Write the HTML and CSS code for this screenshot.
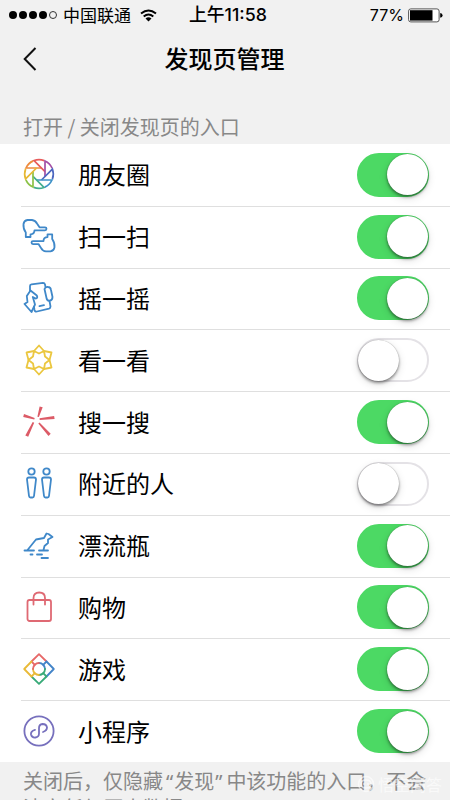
FILE: index.html
```html
<!DOCTYPE html>
<html lang="zh-CN">
<head>
<meta charset="utf-8">
<title>发现页管理</title>
<link rel="stylesheet" href="styles.css">
</head>
<body>
<div class="status">
  <div class="carrier"><span class="signal"><i></i><i></i><i></i><i></i><i class="empty"></i></span><span class="name">中国联通</span>
    <svg class="wifi" width="17" height="13" viewBox="0 0 17 13" fill="none" stroke="#000" stroke-width="2"><path d="M1 4.600Q8.500-1.700 16 4.600M3.700 7.600Q8.500 3.300 13.300 7.600"/><path d="M5.500 9.500Q8.500 7 11.500 9.500L8.500 12.500Z" fill="#000" stroke="none"/></svg>
  </div>
  <div class="time">上午11:58</div>
  <div class="power"><span>77%</span>
    <svg width="35" height="15" viewBox="0 0 35 15"><rect x=".6" y=".9" width="30.500" height="13" rx="2.200" fill="#fff" stroke="#555"/><path d="M2 2.200h22.500v10.400H2z"/><path d="M32.200 5q2.400.5 2.400 2.400t-2.400 2.400z"/></svg>
  </div>
</div>
<header class="nav">
  <svg class="back" width="14" height="24" viewBox="0 0 14 24" fill="none" stroke="#111" stroke-width="2"><path d="M12.500 1L1.700 12L12.500 23"/></svg>
  <h1>发现页管理</h1>
</header>
<p class="caption">打开 / 关闭发现页的入口</p>
<main class="list">
  <div class="row"><svg class="icon" viewBox="0 0 32 32"><defs><path id="blade" d="M18.500 10H3A14.300 14.300 0 0 1 10.200 2.900"/></defs><g fill="none" stroke-width="1.700"><use href="#blade" stroke="#ee8b3d"/><use href="#blade" stroke="#e75b5b" transform="rotate(45 16 16)"/><use href="#blade" stroke="#a34fa5" transform="rotate(90 16 16)"/><use href="#blade" stroke="#4d68c0" transform="rotate(135 16 16)"/><use href="#blade" stroke="#3e91c7" transform="rotate(180 16 16)"/><use href="#blade" stroke="#42ad8f" transform="rotate(225 16 16)"/><use href="#blade" stroke="#8bc247" transform="rotate(270 16 16)"/><use href="#blade" stroke="#e6b834" transform="rotate(315 16 16)"/></g></svg><span class="label">朋友圈</span><span class="switch on"></span></div>
  <div class="row"><svg class="icon" viewBox="0 0 32 32"><defs><path id="hand" d="M2.800 17V12.500Q0 8.500.5 4Q1 .5 4.500 0H9Q12.500.3 14 3.500L16.500 7.300H22Q23.500 7.300 23.500 8.800T22 10.300H11.500Q11.500 14.300 7.500 14.300V17Z"/></defs><g class="line blue"><use href="#hand"/><use href="#hand" transform="rotate(180 16 15.700)"/></g></svg><span class="label">扫一扫</span><span class="switch on"></span></div>
  <div class="row"><svg class="icon" viewBox="0 0 32 32"><g class="line blue"><path d="M7 8.500V4Q7 2.500 8.500 2.300L20 .8Q21.600.8 22 2.500L22.500 5M26.500 19L27.500 24.500Q27.500 26.200 26 26.600L14 29.500Q12 30 11.500 28L11 25"/><path d="M21.500 7Q22.500 4.500 25 5Q27.500 5 28 8L29.500 15Q29.500 18.500 26.500 18.700Q24 19 23.500 16Z"/><path d="M7.500 8.500L13.800 13.500Q15.200 16.500 12.500 16.500L9.800 15L12 22.500L8.500 30L1.500 22L4.500 20L3.800 14Z"/><path d="M16.500 24.200L21 23.200"/></g></svg><span class="label">摇一摇</span><span class="switch on"></span></div>
  <div class="row"><svg class="icon" viewBox="0 0 32 32"><g class="line yellow"><path d="M16 1.500L21 7L28.500 8.500L26.500 16L28.500 23.500L21 25L16 30.500L11 25L3.500 23.500L5.500 16L3.500 8.500L11 7Z"/><path d="M11 7L16 9.500L21 7L22 12.500L26.500 16L22 19.500L21 25L16 22.500L11 25L10 19.500L5.500 16L10 12.500Z"/></g></svg><span class="label">看一看</span><span class="switch"></span></div>
  <div class="row"><svg class="icon" viewBox="0 0 32 32"><g fill="#dc5b67"><path d="M16.600.4l3.100.8-3.800 9.900-1.500-.4zM.2 10.900l.8-3 10.700 4.200-.4 1.500zM16.500 12.300l14.600-2.400.5 3-14.900 1.100zM9.700 16l1.500.8-6 14-2.900-1.400zM15.300 17.600l1.200-1 11.200 11.100-2.200 2.300z"/></g></svg><span class="label">搜一搜</span><span class="switch on"></span></div>
  <div class="row"><svg class="icon" viewBox="0 0 32 32"><g class="line blue"><circle cx="8.500" cy="4.500" r="3.200"/><circle cx="23.500" cy="4.500" r="3.200"/><path d="M6 10.500H11Q13 10.500 13 12.500L11 29Q10.800 30.500 9.500 30.500H7.500Q6.200 30.500 6 29L4 12.500Q4 10.500 6 10.500ZM21 10.500H26Q28 10.500 28 12.500L26 29Q25.800 30.500 24.500 30.500H22.500Q21.200 30.500 21 29L19 12.500Q19 10.500 21 10.500Z"/></g></svg><span class="label">附近的人</span><span class="switch"></span></div>
  <div class="row"><svg class="icon" viewBox="0 0 32 32"><g class="line blue"><path d="M1.500 21.500H11M16 21.500H25M7.500 25.500H9.500M14 25.500H19M18.500 29H25M4.500 21L13 10.500L21 9L23.500 4.500L25.500 5L29.500 8L25 10.500V14L21.500 17L20.500 21"/></g></svg><span class="label">漂流瓶</span><span class="switch on"></span></div>
  <div class="row"><svg class="icon" viewBox="0 0 32 32"><g class="line red"><rect x="4.500" y="9" width="23.500" height="21" rx="2"/><path d="M10.500 13.500V7Q10.500 1.500 16.200 1.500Q22 1.500 22 7V13.500"/></g></svg><span class="label">购物</span><span class="switch on"></span></div>
  <div class="row"><svg class="icon" viewBox="0 0 32 32"><g class="line"><path stroke="#e76868" d="M8.500 8.500L16 1.200L23.500 8.500M8.500 8.500L11.800 11.800"/><path stroke="#4384c8" d="M23.500 8.500L30.800 16L23.500 23.500M23.500 8.500L20.200 11.800"/><path stroke="#38aa78" d="M23.500 23.500L16 30.800L8.500 23.500M23.500 23.500L20.200 20.200"/><path stroke="#e9ba38" d="M8.500 23.500L1.200 16L8.500 8.500M8.500 23.500L11.800 20.200"/><path stroke="#4384c8" d="M16 10A6 6 0 0 1 22 16"/><path stroke="#38aa78" d="M22 16A6 6 0 0 1 16 22"/><path stroke="#e9ba38" d="M16 22A6 6 0 0 1 10 16"/><path stroke="#e76868" d="M10 16A6 6 0 0 1 16 10"/></g></svg><span class="label">游戏</span><span class="switch on"></span></div>
  <div class="row"><svg class="icon" viewBox="0 0 32 32"><g class="line purple"><circle cx="16" cy="16" r="14.600"/><path d="M12 14.800Q7.500 16 8 19.500Q9 23 12.500 22.500Q16 22 16 18.500V13Q16 9.500 19.500 9Q23.500 9 24 12.500Q24 15.500 20 17"/></g></svg><span class="label">小程序</span><span class="switch on"></span></div>
</main>
<footer class="note"><p>关闭后，仅隐藏<q>发现</q>中该功能的入口，不会<br>清空任何历史数据</p><div class="watermark"><svg width="18" height="18" viewBox="0 0 18 18" fill="none" stroke="currentColor" stroke-width="1.500"><circle cx="9" cy="9" r="7.500"/><path d="M4 9Q4 5 9 5T14 9Q14 13 9 13T4 9M7 8v2M11 8v2"/></svg><span>悟空问答</span></div></footer>
</body>
</html>
```
FILE: styles.css
```css
* { box-sizing: border-box; }
body {
  margin: 0;
  width: 450px;
  height: 800px;
  overflow: hidden;
  background: #f1f1f1;
  color: #000;
  font-family: "Noto Sans CJK SC", sans-serif;
}
.status {
  display: grid;
  grid-template-columns: 180px auto 1fr;
  align-items: center;
  height: 30px;
  padding: 0 7px 0 9px;
  font-size: 17px;
  line-height: 30px;
}
.carrier, .power, .signal { display: flex; align-items: center; }
.signal { gap: 2px; }
.signal i { width: 8px; height: 8px; border-radius: 50%; background: #000; }
.signal .empty { background: none; border: 1px solid #333; }
.name { margin-left: 6px; line-height: 28px; padding-bottom: 1px; }
.wifi { margin-left: 9px; }
.time { font-weight: 500; font-family: Inter, "Noto Sans CJK SC", sans-serif; font-size: 17.800px; }
.power { justify-content: flex-end; gap: 4px; font: 16px/30px Inter, sans-serif; }
.nav {
  display: grid;
  grid-template-columns: 1fr auto 1fr;
  align-items: center;
  height: 58px;
  padding: 0 24px 0 23px;
}
.nav h1 { margin: 0; font-size: 24px; font-weight: 500; line-height: 56px; padding-bottom: 2px; }
.caption { margin: 0; height: 56px; padding: 21px 0 0 23px; color: #888; font-size: 20px; line-height: 35px; }
.list { height: 618px; display: grid; grid-template-rows: repeat(10, 1fr); background: #fff; }
.row { position: relative; display: flex; align-items: center; padding: 0 21px 0 23px; }
.row + .row::before { content: ""; position: absolute; top: 0; left: 21px; right: 0; height: 1px; background: #dfdfdf; }
.icon { width: 32px; height: 32px; margin-bottom: 1px; overflow: visible; }
.label { flex: 1; margin-left: 23px; padding-bottom: 1px; font-size: 24px; line-height: 36px; }
.line { fill: none; stroke-width: 1.800; stroke-linejoin: round; stroke-linecap: round; }
.blue { stroke: #3f88c9; }
.yellow { stroke: #ebc740; }
.red { stroke: #df6973; }
.purple { stroke: #7770bd; }
.switch { width: 72px; height: 44px; padding: 2px; border: 2px solid #e4e2e6; border-radius: 22px; background: #fff; display: flex; align-items: center; }
.switch::after { content: ""; flex: none; width: 41px; height: 41px; margin-left: -3px; border-radius: 50%; background: #fff; box-shadow: 0 2px 3px #0006, 0 3px 8px #0002, 0 0 1px #0005; }
.on { border-color: #4cd964; background: #4cd964; justify-content: flex-end; }
.on::after { margin: 0 -3px 0 0; }
.note { position: relative; padding: 5px 0 0 23px; color: #888; font-size: 20px; }
.note p { margin: 0; line-height: 27px; white-space: nowrap; }
.note q { quotes: "“" "”"; }
.note q::before, .note q::after { font-family: "Noto Sans", sans-serif; line-height: 1; }
.note q::before { margin: 0 1px 0 3px; }
.note q::after { margin: 0 4px 0 1px; }
.watermark { position: absolute; left: 357px; top: 13px; display: flex; align-items: center; gap: 3px; color: #fff9; font-size: 16px; line-height: 18px; }
```
